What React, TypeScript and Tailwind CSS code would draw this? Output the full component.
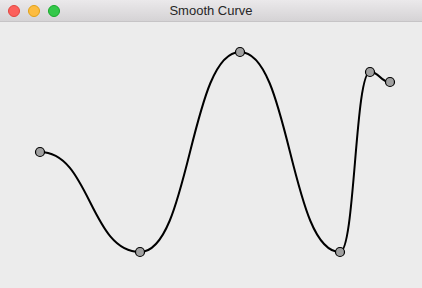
const points = [
	[40, 152],
	[140, 252],
	[240, 52],
	[340, 252],
	[370, 72],
	[390, 82],
]

// cubic segments with control points at the horizontal midpoint
const buildPath = () => {
	let d = `M${points[0][0]},${points[0][1]}`
	for (let i = 1; i < points.length; i++) {
		const [x0, y0] = points[i - 1]
		const [x1, y1] = points[i]
		const mx = (x0 + x1) / 2
		d += ` C${mx},${y0} ${mx},${y1} ${x1},${y1}`
	}
	return d
}

const App = () => {
	return (
		<div className="flex h-[288px] w-[422px] flex-col overflow-hidden bg-[#ececec] font-['Liberation_Sans',sans-serif]">
			{/* Title bar */}
			<div className="relative flex h-[22px] shrink-0 items-center border-b border-[#c6c4c6] bg-gradient-to-b from-[#ebe9eb] to-[#d5d3d5]">
				<div className="flex items-center gap-2 pl-2">
					<span className="h-3 w-3 rounded-full border border-[#e2463f] bg-[#fc605c]" />
					<span className="h-3 w-3 rounded-full border border-[#e1a116] bg-[#fdbc40]" />
					<span className="h-3 w-3 rounded-full border border-[#17a92a] bg-[#34c84a]" />
				</div>
				<div className="absolute inset-x-0 top-0 flex h-full items-center justify-center text-[13px] text-[#262626]">
					Smooth Curve
				</div>
			</div>

			{/* Canvas */}
			<div className="flex-1">
				<svg width="422" height="266" viewBox="0 22 422 266" className="block">
					<path d={buildPath()} fill="none" stroke="#000" strokeWidth="2" />
					{points.map(([x, y], i) => (
						<circle key={i} cx={x} cy={y} r="4.5" fill="#a0a0a0" stroke="#000" strokeWidth="1.2" />
					))}
				</svg>
			</div>
		</div>
	)
}

export default App
